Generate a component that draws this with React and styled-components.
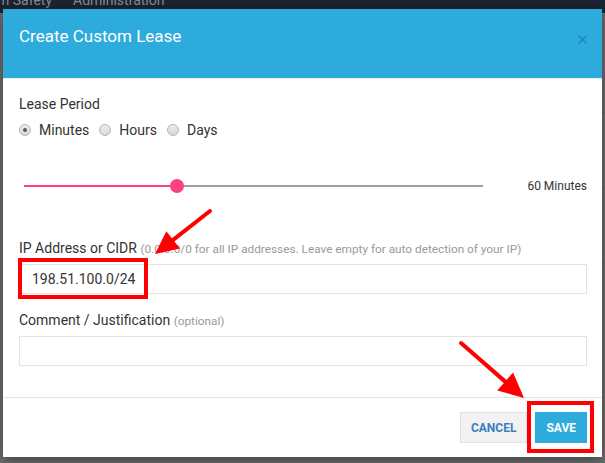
import React from 'react'
import styled, { createGlobalStyle } from 'styled-components'

const GlobalStyle = createGlobalStyle`
  html, body {
    margin: 0;
    padding: 0;
    background: #6f6f6f;
    font-family: Roboto, 'Liberation Sans', Arial, sans-serif;
  }
  * { box-sizing: border-box; }
`

const Page = styled.div`
  position: relative;
  width: 605px;
  height: 463px;
  overflow: hidden;
  background: #6f6f6f;
`

const NavBar = styled.div`
  display: flex;
  align-items: flex-end;
  gap: 21px;
  height: 13px;
  background: #1b2431;
  overflow: hidden;
  margin-left: -3px;
`

const NavItem = styled.span`
  font-size: 14px;
  line-height: 14px;
  margin-bottom: 6px;
  color: #8a8c8f;
  white-space: nowrap;
`

const BehindRow = styled.div`
  height: ${p => p.$h}px;
  border-bottom: 1px solid #666;
`

const Modal = styled.div`
  position: absolute;
  left: 3px;
  top: 9px;
  width: 599px;
  height: 448px;
  display: flex;
  flex-direction: column;
  background: #fff;
  box-shadow: 0 3px 12px rgba(0, 0, 0, 0.45);
`

const Header = styled.div`
  height: 70px;
  flex: none;
  display: flex;
  justify-content: space-between;
  align-items: flex-start;
  padding: 15px 15px 0 16px;
  background: #2eabdd;
  border-bottom: 1px solid #e5eef3;
`

const Title = styled.h4`
  margin: 0;
  font-size: 17px;
  line-height: 24px;
  font-weight: 400;
  color: #fff;
`

const CloseButton = styled.button`
  margin-top: 11px;
  width: 9px;
  height: 9px;
  padding: 0;
  border: 0;
  background: none;
  display: flex;
  svg { display: block; }
`

const Body = styled.div`
  flex: 1;
  display: flex;
  flex-direction: column;
  padding: 15px 15px 0 16px;
`

const Label = styled.div`
  font-size: 14px;
  line-height: 20px;
  color: #333;
  margin-top: ${p => p.$gap || 0}px;
`

const Hint = styled.span`
  font-size: 11.8px;
  line-height: 1;
  color: #9a9a9a;
`

const RadioRow = styled.div`
  display: flex;
  align-items: center;
  height: 20px;
  margin-top: 6px;
`

const RadioOption = styled.label`
  display: flex;
  align-items: center;
  gap: 8px;
  margin-right: 10px;
  font-size: 14px;
  color: #333;
`

const RadioCircle = styled.span`
  width: 12px;
  height: 12px;
  border-radius: 50%;
  border: 1px solid #b4b4b4;
  background: linear-gradient(#ececec, #d8d8d8);
  display: flex;
  align-items: center;
  justify-content: center;
  &::after {
    content: '';
    width: 4px;
    height: 4px;
    border-radius: 50%;
    background: ${p => (p.$checked ? '#5a5a5a' : 'transparent')};
  }
`

const SliderRow = styled.div`
  display: flex;
  align-items: center;
  height: 20px;
  margin-top: 36px;
`

const Track = styled.div`
  position: relative;
  flex: 1;
  height: 2px;
  margin-left: 5px;
  background: #9e9e9e;
`

const TrackFill = styled.div`
  height: 100%;
  background: #ff4081;
`

const Thumb = styled.span`
  position: absolute;
  top: 50%;
  width: 14px;
  height: 14px;
  margin: -7px 0 0 -7px;
  border-radius: 50%;
  background: #ff4081;
`

const SliderValue = styled.span`
  margin-left: 44px;
  width: 60px;
  text-align: right;
  font-size: 12px;
  color: #333;
`

const TextInput = styled.input`
  display: block;
  width: 100%;
  height: 30px;
  margin-top: 6px;
  padding: 0 12px;
  border: 1px solid #e3e3e3;
  border-radius: 0;
  font-family: inherit;
  font-size: 14px;
  color: #333;
  outline: none;
`

const Footer = styled.div`
  flex: none;
  display: flex;
  justify-content: flex-end;
  gap: 8px;
  padding: 14px 15px 14px 16px;
  border-top: 1px solid #e3e3e3;
`

const Button = styled.button`
  height: 31px;
  padding: 0 ${p => (p.$primary ? 11 : 10)}px;
  font-family: inherit;
  font-size: 12px;
  font-weight: 700;
  border: ${p => (p.$primary ? '0' : '1px solid #e2e2e2')};
  background: ${p => (p.$primary ? '#2eabdd' : '#f2f2f2')};
  color: ${p => (p.$primary ? '#fff' : '#3a7fbf')};
  border-radius: 0;
`

const Highlight = styled.div`
  position: absolute;
  left: ${p => p.$x}px;
  top: ${p => p.$y}px;
  width: ${p => p.$w}px;
  height: ${p => p.$h}px;
  border: 4px solid #ff0000;
  pointer-events: none;
`

const Annotations = styled.svg`
  position: absolute;
  left: 0;
  top: 0;
  pointer-events: none;
`

const Arrow = ({ from, to, head = 22, half = 10 }) => {
  const dx = to[0] - from[0]
  const dy = to[1] - from[1]
  const len = Math.hypot(dx, dy)
  const ux = dx / len
  const uy = dy / len
  const bx = to[0] - ux * head
  const by = to[1] - uy * head
  const nx = -uy
  const ny = ux
  const pts = [
    `${to[0]},${to[1]}`,
    `${bx + nx * half},${by + ny * half}`,
    `${bx - nx * half},${by - ny * half}`
  ].join(' ')
  return (
    <g>
      <line x1={from[0]} y1={from[1]} x2={bx + ux * 2} y2={by + uy * 2} stroke="#ff0000" strokeWidth="4" strokeLinecap="round" />
      <polygon points={pts} fill="#ff0000" />
    </g>
  )
}

const Radio = ({ label, checked }) => (
  <RadioOption>
    <RadioCircle $checked={checked} />
    {label}
  </RadioOption>
)

export default function App() {
  const minutes = 60
  const max = 180
  const pct = (minutes / max) * 100

  return (
    <>
      <GlobalStyle />
      <Page>
        <NavBar>
          <NavItem>m Safety</NavItem>
          <NavItem>Administration</NavItem>
        </NavBar>
        <BehindRow $h={100} />
        <BehindRow $h={75} />
        <BehindRow $h={75} />

        <Modal>
          <Header>
            <Title>Create Custom Lease</Title>
            <CloseButton aria-label="close">
              <svg width="9" height="9" viewBox="0 0 9 9">
                <path d="M0.5 0.5 L8.5 8.5 M8.5 0.5 L0.5 8.5" stroke="#1f88b8" strokeWidth="1.4" />
              </svg>
            </CloseButton>
          </Header>

          <Body>
            <Label>Lease Period</Label>
            <RadioRow>
              <Radio label="Minutes" checked />
              <Radio label="Hours" />
              <Radio label="Days" />
            </RadioRow>

            <SliderRow>
              <Track>
                <TrackFill style={{ width: `${pct}%` }} />
                <Thumb style={{ left: `${pct}%` }} />
              </Track>
              <SliderValue>{minutes} Minutes</SliderValue>
            </SliderRow>

            <Label $gap={42}>
              IP Address or CIDR <Hint>(0.0.0.0/0 for all IP addresses. Leave empty for auto detection of your IP)</Hint>
            </Label>
            <TextInput defaultValue="198.51.100.0/24" />

            <Label $gap={16}>
              Comment / Justification <Hint>(optional)</Hint>
            </Label>
            <TextInput defaultValue="" />
          </Body>

          <Footer>
            <Button>CANCEL</Button>
            <Button $primary>SAVE</Button>
          </Footer>
        </Modal>

        <Highlight $x={18} $y={258} $w={130} $h={41} />
        <Highlight $x={527} $y={401} $w={67} $h={52} />

        <Annotations width="605" height="463" viewBox="0 0 605 463">
          <Arrow from={[210, 211]} to={[155, 254]} head={23} half={11} />
          <Arrow from={[461, 343]} to={[524, 398]} head={25} half={12} />
        </Annotations>
      </Page>
    </>
  )
}
